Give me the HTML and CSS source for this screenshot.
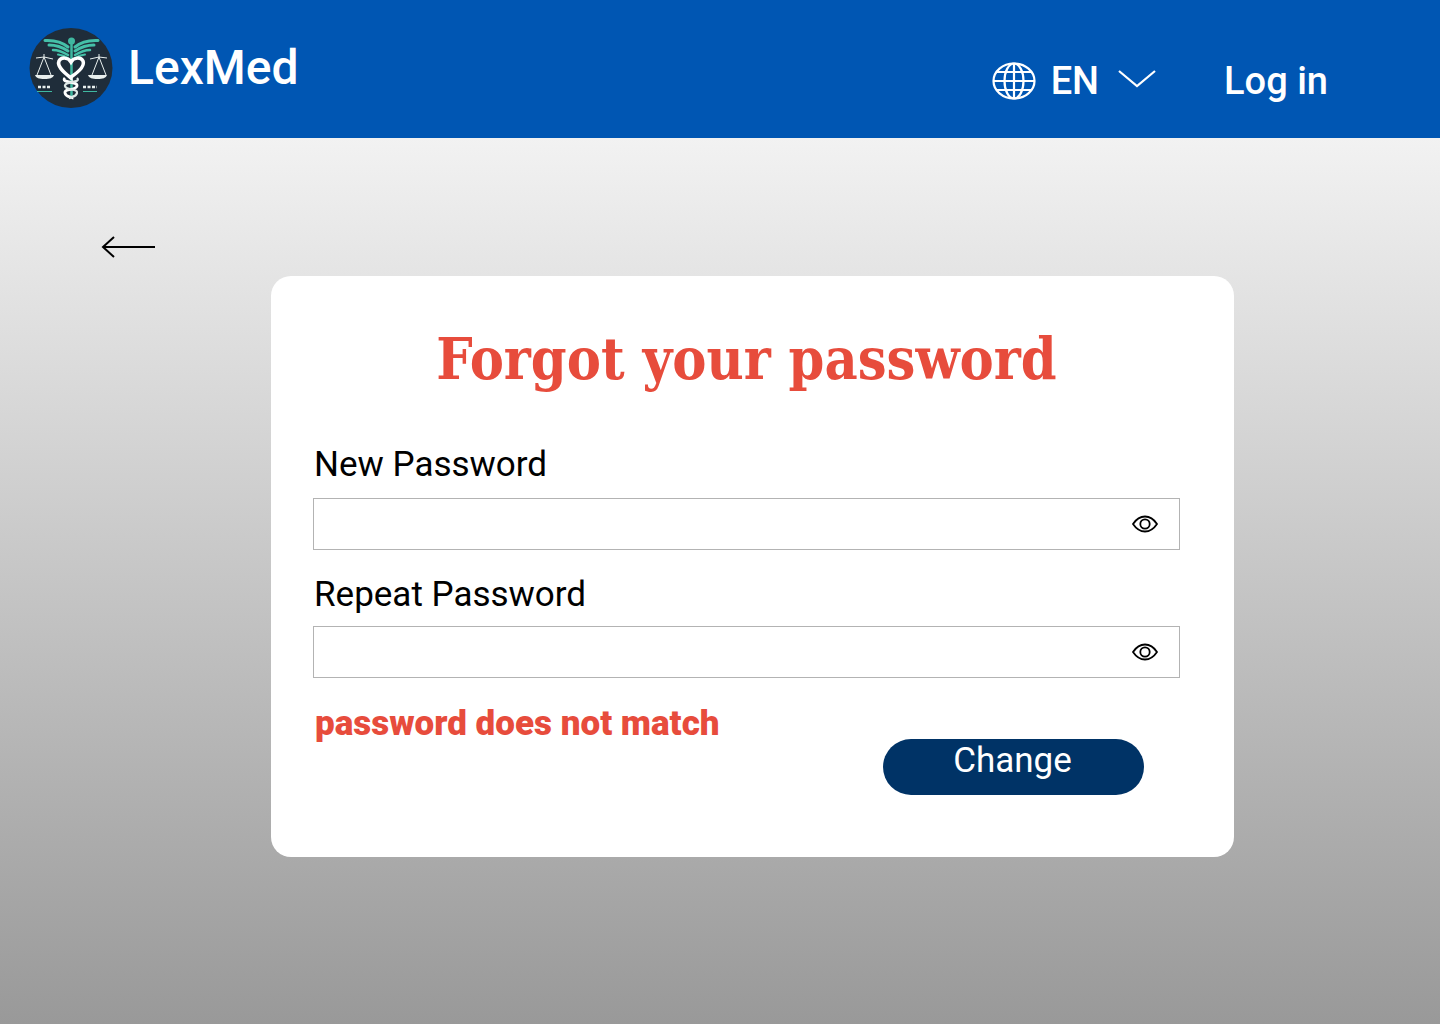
FILE: index.html
```html
<!DOCTYPE html>
<html lang="en">
<head>
<meta charset="utf-8">
<title>LexMed</title>
<link rel="stylesheet" href="styles.css">
</head>
<body>
<header class="topbar">
  <div class="brand">
    <svg class="logo" viewBox="0 0 84 80" aria-hidden="true">
      <ellipse cx="42" cy="40" rx="41.500" ry="40" fill="#1f2d3a"/>
      <circle cx="42.500" cy="13" r="3.500" fill="#3fb8a0"/>
      <g fill="none" stroke="#45c0a8" stroke-linecap="round">
        <path stroke-width="3" d="M39 19C33 14 25 12 16 12.500"/>
        <path stroke-width="3" d="M39 23C33 19 26 17 20 17"/>
        <path stroke-width="2.500" d="M39 27C34 24 29 22 24 22"/>
        <path stroke-width="2" d="M39 30C36 28 33 27 29 26.500"/>
        <path stroke-width="3" d="M46 19C52 14 60 12 69 12.500"/>
        <path stroke-width="3" d="M46 23C52 19 59 17 65 17"/>
        <path stroke-width="2.500" d="M46 27C51 24 56 22 61 22"/>
        <path stroke-width="2" d="M46 30C49 28 52 27 56 26.500"/>
      </g>
      <g fill="none" stroke="#e8efee" stroke-width="1">
        <path d="M7 30l8-1 9 2M15 26v3M15 29L8 47M15 29l7 18"/>
        <path d="M78 30l-8-1-9 2M70 26v3M70 29l-7 18M70 29l7 18"/>
      </g>
      <path d="M6 47h19c-1 3-4 4-9.500 4S7 50 6 47zM59 47h19c-1 3-4 4-9.500 4s-8.500-1-9.500-4z" fill="#e8efee"/>
      <path d="M42.500 16v54" stroke="#3fb8a0" stroke-width="2.500"/>
      <path d="M42 50C33 43 28 38 30 33c2-4 9-4 12 1 3-5 10-5 12-1 2 5-3 10-12 16z" fill="none" stroke="#fff" stroke-width="3.500"/>
      <path d="M36 50c-5 5 13 3 12 8s-13 2-12 7 8 3 7 6" fill="none" stroke="#fff" stroke-width="2.800"/>
      <path d="M48 50c5 5-13 3-12 8s13 2 12 7-8 3-7 6" fill="none" stroke="#dfe9e7" stroke-width="2.200"/>
      <path d="M9 59h13M54 59h14" stroke="#e8efee" stroke-width="2.500" stroke-dasharray="3 1.500"/>
      <path d="M8 63.500h15M54 63.500h14" stroke="#3fb8a0" stroke-width="1"/>
    </svg>
    <span class="brand-name">LexMed</span>
  </div>
  <nav class="nav">
    <div class="lang">
      <svg class="globe" viewBox="0 0 44 38" aria-hidden="true" fill="none" stroke="#fff" stroke-width="2.200">
        <ellipse cx="22" cy="19" rx="20.500" ry="17.500"/>
        <ellipse cx="22" cy="19" rx="9.500" ry="17.500"/>
        <path d="M22 1.500v35M1.500 19h41M4.500 10h35M4.500 28h35"/>
      </svg>
      <span class="lang-code">EN</span>
      <svg class="chevron" viewBox="0 0 38 20" aria-hidden="true" fill="none" stroke="#fff" stroke-width="2.200"><path d="M1 2l18 15L37 2"/></svg>
    </div>
    <a class="login">Log in</a>
  </nav>
</header>
<main class="page">
  <svg class="back" viewBox="0 0 54 22" aria-hidden="true" fill="none" stroke="#000" stroke-width="2"><path d="M54 11H2M13 1L2 11l11 10"/></svg>
  <section class="card">
    <h1 class="title">Forgot your password</h1>
    <label class="label label-first">New Password</label>
    <div class="field">
      <svg class="eye" viewBox="0 0 26 18" aria-hidden="true" fill="none" stroke="#000" stroke-width="1.800"><path d="M1 9c3-4.500 7-7.500 12-7.500S22 4.500 25 9c-3 4.500-7 7.500-12 7.500S4 13.500 1 9z"/><circle cx="13" cy="9" r="4.700"/></svg>
    </div>
    <label class="label label-second">Repeat Password</label>
    <div class="field">
      <svg class="eye" viewBox="0 0 26 18" aria-hidden="true" fill="none" stroke="#000" stroke-width="1.800"><path d="M1 9c3-4.500 7-7.500 12-7.500S22 4.500 25 9c-3 4.500-7 7.500-12 7.500S4 13.500 1 9z"/><circle cx="13" cy="9" r="4.700"/></svg>
    </div>
    <div class="actions">
      <p class="error">password does not match</p>
      <button class="submit" type="button">Change</button>
    </div>
  </section>
</main>
</body>
</html>
```
FILE: styles.css
```css
* { box-sizing: border-box; }
html, body { margin: 0; height: 100%; }
body {
  display: flex;
  flex-direction: column;
  min-height: 1024px;
  font-family: Roboto, "Liberation Sans", sans-serif;
  overflow: hidden;
}
.topbar {
  flex: 0 0 138px;
  height: 138px;
  background: #0056b3;
  color: #fff;
  display: flex;
  justify-content: space-between;
  padding: 28px 112px 0 29px;
}
.brand { display: flex; align-items: flex-start; gap: 15px; }
.logo { width: 84px; height: 80px; display: block; }
.brand-name { font-size: 48px; font-weight: 500; line-height: 80px; height: 80px; }
.nav { display: flex; align-items: flex-start; gap: 68px; padding-top: 34px; }
.lang { display: flex; align-items: center; height: 38px; }
.globe { width: 44px; height: 38px; margin-right: 15px; }
.lang-code { font-size: 38px; font-weight: 500; line-height: 38px; margin-right: 19px; }
.chevron { width: 38px; height: 20px; margin-top: -4px; }
.login { font-size: 38px; font-weight: 500; line-height: 38px; }
.page {
  flex: 1;
  background: linear-gradient(180deg, #f2f2f2 0%, #999 100%);
  padding: 98px 0 0 101px;
  position: relative;
}
.back { display: block; width: 54px; height: 22px; }
.card {
  width: 963px;
  height: 581px;
  margin: 18px 0 0 170px;
  background: #fff;
  border-radius: 20px;
  padding: 43px 54px 0 42px;
}
.title {
  margin: 0;
  font-family: "DejaVu Serif Condensed", "DejaVu Serif", serif;
  font-weight: 700;
  font-size: 57px;
  line-height: 80px;
  color: #e74c3c;
  text-align: center;
}
.label {
  display: block;
  font-size: 35px;
  line-height: 42px;
  color: #000;
  padding-left: 1px;
}
.label-first { margin-top: 45px; margin-bottom: 12px; }
.label-second { margin-top: 24px; margin-bottom: 10px; }
.field {
  height: 52px;
  border: 1px solid #b3b3b3;
  background: #fff;
  display: flex;
  align-items: center;
  justify-content: flex-end;
  padding-right: 21px;
}
.eye { width: 26px; height: 18px; display: block; }
.actions {
  display: flex;
  justify-content: space-between;
  align-items: flex-start;
  margin-top: 24px;
  padding-right: 36px;
}
.error {
  margin: 1px 0 0;
  padding-left: 2px;
  font-size: 35px;
  font-weight: 900;
  line-height: 42px;
  color: #e74c3c;
}
.submit {
  width: 261px;
  height: 56px;
  margin-top: 37px;
  border: 0;
  border-radius: 28px;
  background: #003366;
  color: #fff;
  font-family: inherit;
  font-size: 35px;
  line-height: 42px;
  padding: 0 2px 12px 0;
}
```
